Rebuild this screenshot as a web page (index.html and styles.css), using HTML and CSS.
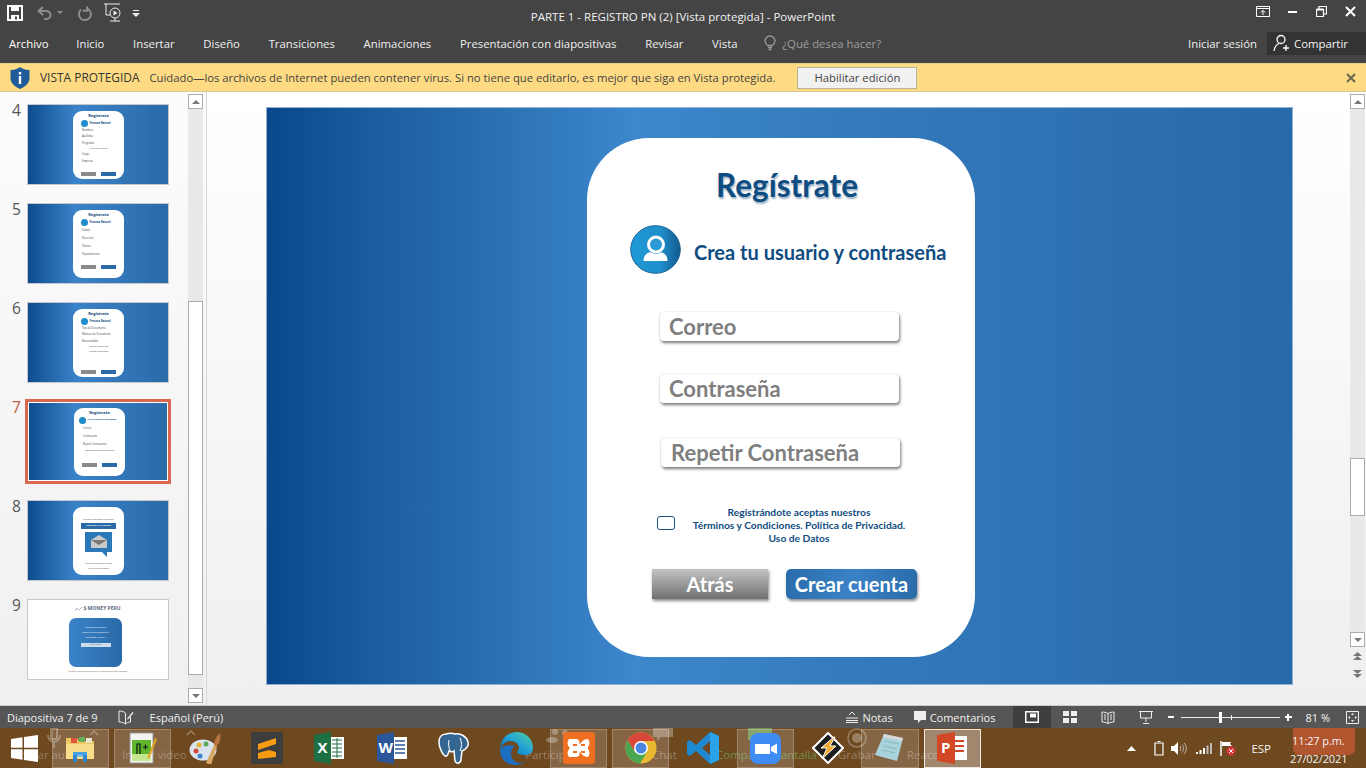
FILE: index.html
```html
<!DOCTYPE html>
<html lang="es">
<head>
    <meta charset="UTF-8">
    <title>PARTE 1 - REGISTRO PN (2) [Vista protegida] - PowerPoint</title>
    <link rel="stylesheet" href="styles.css">
</head>
<body>
    <!-- title bar -->
    <header class="titlebar">
        <div class="qat">
            <svg class="qat-save" width="16" height="16" viewBox="0 0 16 16"><path d="M1 1h14v14H1z" fill="none" stroke="#fff" stroke-width="2"/><path d="M4 1h8v5H4zM4 10h8v5H4z" fill="#fff"/><path d="M8 11.5h2v3H8z" fill="#444"/></svg>
            <svg class="qat-undo" width="18" height="16" viewBox="0 0 18 16"><path d="M7 2 2.5 6 7 10M3 6h7a4 4 0 0 1 1 8H8" fill="none" stroke="#8c8c8c" stroke-width="2"/></svg>
            <span class="qat-caret"></span>
            <svg class="qat-redo" width="16" height="16" viewBox="0 0 16 16"><path d="M10 1.5v4.2h-4M10 3.500a6 6 0 1 1-6 1" fill="none" stroke="#8c8c8c" stroke-width="2"/></svg>
            <svg class="qat-show" width="18" height="19" viewBox="0 0 18 19"><path d="M0 1h16M2 1v11h4M6 18h10M11 15v3" fill="none" stroke="#eee" stroke-width="1"/><circle cx="11" cy="10" r="5" fill="none" stroke="#eee"/><path d="M9.5 7.5v5l4-2.500z" fill="#eee"/></svg>
            <svg class="qat-more" width="8" height="8" viewBox="0 0 8 8"><path d="M1 1h6v1H1zM0 4h8L4 8z" fill="#eee"/></svg>
        </div>
        <div class="doc-title">PARTE 1 - REGISTRO PN (2) [Vista protegida] - PowerPoint</div>
        <div class="win-btns">
            <svg width="14" height="11" viewBox="0 0 14 11"><path d="M.5.5h13v10H.5zM1 2.5h12M7 9V4.5M4.8 6.5 7 4.3l2.2 2.200" fill="none" stroke="#fff"/></svg>
            <svg width="10" height="10" viewBox="0 0 10 10"><path d="M0 5h9" stroke="#fff" stroke-width="2"/></svg>
            <svg width="11" height="11" viewBox="0 0 11 11"><path d="M.5 3.5h7v7h-7zM3 3V.5h7.500V8H8" fill="none" stroke="#fff" stroke-width="1.2"/><path d="M.5 3.5h7" stroke="#fff" stroke-width="2"/></svg>
            <svg width="11" height="11" viewBox="0 0 11 11"><path d="m1 1 9 9M10 1l-9 9" stroke="#fff" stroke-width="2"/></svg>
        </div>
    </header>

    <!-- ribbon tabs -->
    <nav class="tabs">
        <span class="tab tab-file">Archivo</span>
        <span class="tab">Inicio</span>
        <span class="tab">Insertar</span>
        <span class="tab">Diseño</span>
        <span class="tab">Transiciones</span>
        <span class="tab">Animaciones</span>
        <span class="tab">Presentación con diapositivas</span>
        <span class="tab">Revisar</span>
        <span class="tab">Vista</span>
        <span class="tell-me">
            <svg width="12" height="16" viewBox="0 0 12 16"><path d="M3.5 10.5C2 9 1 7.8 1 6a5 5 0 0 1 10 0c0 1.8-1 3-2.5 4.5zM4 12.5h4M4.5 14.500h3" fill="none" stroke="#9a9a9a" stroke-width="1.3"/></svg>
            ¿Qué desea hacer?
        </span>
        <span class="signin">Iniciar sesión</span>
        <span class="share">
            <svg width="18" height="18" viewBox="0 0 18 18"><circle cx="8" cy="5.5" r="4" fill="none" stroke="#fff" stroke-width="1.3"/><path d="M1 17c.5-4 2.5-6.500 5-7.500M13 11v6M10 14h6" fill="none" stroke="#fff" stroke-width="1.3"/></svg>
            Compartir
        </span>
    </nav>

    <!-- protected view bar -->
    <div class="msgbar">
        <svg class="msg-shield" width="20" height="22" viewBox="0 0 20 22"><path d="M10 0c2.5 2 5.5 2.8 9.5 3v8c0 5-4 8.5-9.5 11C4.5 19.500.5 16 .5 11V3C4.5 2.8 7.5 2 10 0z" fill="#1f5c99"/><path d="M8.8 5h2.4v2.4H8.8zM8.8 9h2.4v8H8.8z" fill="#fff"/></svg>
        <b class="msg-head">VISTA PROTEGIDA</b>
        <span class="msg-text">Cuidado—los archivos de Internet pueden contener virus. Si no tiene que editarlo, es mejor que siga en Vista protegida.</span>
        <button class="msg-btn">Habilitar edición</button>
        <svg class="msg-close" width="10" height="10" viewBox="0 0 10 10"><path d="m1 1 8 8M9 1 1 9" stroke="#6b6650" stroke-width="2"/></svg>
    </div>

    <main class="workspace">
        <!-- slide thumbnails -->
        <aside class="thumbs">
            <div class="thumb-list">
                <div class="thumb-row">
                    <span class="thumb-num">4</span>
                    <div class="thumb">
                        <div class="mini-card">
                            <div class="mini-title">Regístrate</div>
                            <div class="mini-head"><i class="mini-dot"></i>Persona Natural</div>
                            <div class="mini-line">Nombres</div>
                            <div class="mini-line">Apellidos</div>
                            <div class="mini-line">Programa</div>
                            <div class="mini-note">¿Cuál es tu género?</div>
                            <div class="mini-line">Cargo</div>
                            <div class="mini-line">Empresa</div>
                            <div class="mini-btns"><i class="mini-back"></i><i class="mini-next"></i></div>
                        </div>
                    </div>
                </div>
                <div class="thumb-row">
                    <span class="thumb-num">5</span>
                    <div class="thumb">
                        <div class="mini-card">
                            <div class="mini-title">Regístrate</div>
                            <div class="mini-head"><i class="mini-dot"></i>Persona Natural</div>
                            <div class="mini-line mini-wide">Estado</div>
                            <div class="mini-line mini-wide">Dirección</div>
                            <div class="mini-line mini-wide">Distrito</div>
                            <div class="mini-line mini-wide">Departamento</div>
                            <div class="mini-btns mini-btns-high"><i class="mini-back"></i><i class="mini-next"></i></div>
                        </div>
                    </div>
                </div>
                <div class="thumb-row">
                    <span class="thumb-num">6</span>
                    <div class="thumb">
                        <div class="mini-card">
                            <div class="mini-title">Regístrate</div>
                            <div class="mini-head"><i class="mini-dot"></i>Persona Natural</div>
                            <div class="mini-line">Tipo de Documento</div>
                            <div class="mini-line">Número de Documento</div>
                            <div class="mini-line">Nacionalidad</div>
                            <div class="mini-note">Adjuntar documento</div>
                            <div class="mini-note">Adjuntar documento</div>
                            <div class="mini-btns"><i class="mini-back"></i><i class="mini-next"></i></div>
                        </div>
                    </div>
                </div>
                <div class="thumb-row thumb-row-active">
                    <span class="thumb-num">7</span>
                    <div class="thumb thumb-active">
                        <div class="mini-card">
                            <div class="mini-title">Regístrate</div>
                            <div class="mini-head mini-head-long"><i class="mini-dot"></i>Crea tu usuario y contraseña</div>
                            <div class="mini-line mini-wide">Correo</div>
                            <div class="mini-line mini-wide">Contraseña</div>
                            <div class="mini-line mini-wide">Repetir Contraseña</div>
                            <div class="mini-note">Registrándote aceptas nuestros</div>
                            <div class="mini-btns mini-btns-high"><i class="mini-back"></i><i class="mini-next"></i></div>
                        </div>
                    </div>
                </div>
                <div class="thumb-row">
                    <span class="thumb-num">8</span>
                    <div class="thumb">
                        <div class="mini-card mini-card-mail">
                            <div class="mini-note">Se envió un mensaje a tu correo</div>
                            <div class="mini-banner">CONFIRMA TU CORREO</div>
                            <svg class="mini-mail" width="30" height="26" viewBox="0 0 30 26"><path d="M1 0h27v20h-5v5l-5-5H1z" fill="#2a78b8"/><path d="M7 8l8-5 8 5v8H7z" fill="#c9c9c9"/><path d="M7 8l8 5 8-5" fill="#777"/></svg>
                            <div class="mini-note">Revisa tu bandeja de entrada</div>
                            <div class="mini-note">Correo de verificación</div>
                        </div>
                    </div>
                </div>
                <div class="thumb-row">
                    <span class="thumb-num">9</span>
                    <div class="thumb thumb-white">
                        <div class="mini-logo">
                            <svg width="7" height="4" viewBox="0 0 7 4"><path d="M0 4 2 1l2 2 3-3" fill="none" stroke="#7f93ad" stroke-width=".7"/></svg>
                            $ MONEY PERU
                        </div>
                        <div class="mini-square">
                            <div class="mini-note">Gracias por registrarte</div>
                            <div class="mini-note">Usuario: usuario@money.pe</div>
                            <div class="mini-note">Contraseña: *******</div>
                            <div class="mini-pill">Iniciar sesión</div>
                        </div>
                        <div class="mini-foot">Registro de usuarios para Money Perú. Todos los derechos reservados.</div>
                    </div>
                </div>
            </div>
            <div class="scroll scroll-thumbs">
                <span class="scroll-btn"><i class="arrow-up"></i></span>
                <div class="scroll-track"><div class="scroll-knob"></div></div>
                <span class="scroll-btn"><i class="arrow-down"></i></span>
            </div>
        </aside>

        <!-- current slide -->
        <section class="stage">
            <div class="slide">
                <div class="card">
                    <h1 class="card-title">Regístrate</h1>
                    <div class="card-head">
                        <svg class="avatar" width="51" height="49" viewBox="0 0 51 49">
                            <defs><linearGradient id="av" x1="0" x2="1" y1="0" y2="0"><stop offset="0" stop-color="#1e9ad6"/><stop offset=".6" stop-color="#1f8fcb"/><stop offset="1" stop-color="#13598f"/></linearGradient></defs>
                            <ellipse cx="25.5" cy="24.5" rx="24.8" ry="23.8" fill="url(#av)" stroke="#1a5f94"/>
                            <path d="M13.5 36c0-6 4-9 8-9h8c4 0 8 3 8 9z" fill="#fff"/>
                            <circle cx="26" cy="19.500" r="9.500" fill="#1f8fcb"/>
                            <circle cx="26" cy="19.500" r="7.500" fill="#2a9ad4" stroke="#fff" stroke-width="3"/>
                        </svg>
                        <h2 class="card-sub">Crea tu usuario y contraseña</h2>
                    </div>
                    <div class="field field-first">Correo</div>
                    <div class="field">Contraseña</div>
                    <div class="field field-last">Repetir Contraseña</div>
                    <div class="terms">
                        <span class="check"></span>
                        <p class="terms-text">Registrándote aceptas nuestros<br>Términos y Condiciones. Política de Privacidad.<br>Uso de Datos</p>
                    </div>
                    <div class="actions">
                        <span class="btn btn-back">Atrás</span>
                        <span class="btn btn-create">Crear cuenta</span>
                    </div>
                </div>
            </div>
        </section>

        <div class="scroll scroll-main">
            <span class="scroll-btn"><i class="arrow-up"></i></span>
            <div class="scroll-track"><div class="scroll-knob"></div></div>
            <span class="scroll-btn"><i class="arrow-down"></i></span>
            <svg class="page-arrows" width="11" height="26" viewBox="0 0 11 26"><path d="M5.5 0 10 4H1zM5.500 4 10 8H1zM1 18h9l-4.500 4zM1 22h9l-4.500 4z" fill="#777"/></svg>
        </div>
    </main>

    <!-- status bar -->
    <footer class="status">
        <span class="st-count">Diapositiva 7 de 9</span>
        <svg class="st-spell" width="16" height="15" viewBox="0 0 16 15"><path d="M7.5 3C6 1.5 3 1 1 1v11c2 0 5 .5 6.5 2 1-1 2.5-1.800 5-2V7M7.5 3v11" fill="none" stroke="#eee"/><path d="m9.5 8 5-6 1 1-5 6-1.500.5z" fill="#eee"/></svg>
        <span class="st-lang">Español (Perú)</span>
        <span class="st-notes">
            <svg width="12" height="12" viewBox="0 0 12 12"><path d="M0 7h12M0 9.5h12M0 11.500h12M3 4l3-3 3 3" fill="none" stroke="#eee"/></svg>
            Notas
        </span>
        <span class="st-comments">
            <svg width="12" height="13" viewBox="0 0 12 13"><path d="M0 0h12v9H7l-3 3V9H0z" fill="#eee"/></svg>
            Comentarios
        </span>
        <span class="view view-active"><svg width="14" height="12" viewBox="0 0 14 12"><path d="M.75.75h12.5v10.5H.75z" fill="none" stroke="#fff" stroke-width="1.5"/><path d="M5 2.5h6v4H5z" fill="#fff"/></svg></span>
        <span class="view"><svg width="14" height="12" viewBox="0 0 14 12"><path d="M0 0h6v5H0zM8 0h6v5H8zM0 7h6v5H0zM8 7h6v5H8z" fill="#eee"/></svg></span>
        <span class="view"><svg width="14" height="13" viewBox="0 0 14 13"><path d="M1 1c2 0 4 .3 6 1.500C9 1.300 11 1 13 1v10c-2 0-4 .3-6 1.500C5 11.300 3 11 1 11zM7 2.500v10M3 4h2M3 6h2M3 8h2M9 4h2M9 6h2M9 8h2" fill="none" stroke="#eee"/></svg></span>
        <span class="view"><svg width="14" height="13" viewBox="0 0 14 13"><path d="M0 .5h14M1.500 1v6h11V1M7 7v4M4 12.500h6" fill="none" stroke="#eee"/></svg></span>
        <div class="zoom-box">
            <i class="zoom-minus"></i>
            <div class="zoom-track"><i class="zoom-tick"></i><i class="zoom-knob"></i></div>
            <i class="zoom-plus"></i>
        </div>
        <span class="st-zoom">81 %</span>
        <svg class="st-fit" width="13" height="13" viewBox="0 0 13 13"><path d="M.5.5h12v12H.5z" fill="none" stroke="#eee"/><path d="M6.5 2 8 4H5zM6.5 11 8 9H5zM2 6.500 4 5v3zM11 6.500 9 5v3z" fill="#eee"/></svg>
    </footer>

    <!-- windows taskbar -->
    <div class="taskbar">
        <!-- zoom toolbar showing through the taskbar -->
        <div class="ghosts">
            <svg class="ghost-mark ghost-mic" width="14" height="20" viewBox="0 0 14 20"><path d="M4 0h6v11H4zM1 7c0 9 12 9 12 0M7 14v6" fill="none" stroke="currentColor" stroke-width="2"/></svg>
            <svg class="ghost-mark ghost-up-a" width="10" height="6" viewBox="0 0 10 6"><path d="m1 5 4-4 4 4" fill="none" stroke="currentColor" stroke-width="1.5"/></svg>
            <svg class="ghost-mark ghost-up-b" width="10" height="6" viewBox="0 0 10 6"><path d="m1 5 4-4 4 4" fill="none" stroke="currentColor" stroke-width="1.5"/></svg>
            <svg class="ghost-mark ghost-people" width="28" height="14" viewBox="0 0 28 14"><circle cx="9" cy="3" r="3" fill="currentColor"/><circle cx="19" cy="4" r="3" fill="currentColor"/><ellipse cx="6" cy="11" rx="6" ry="3" fill="currentColor"/></svg>
            <svg class="ghost-mark ghost-bubble" width="20" height="14" viewBox="0 0 20 14"><path d="M0 0h20v9H8l-4 4V9H0z" fill="currentColor"/></svg>
            <svg class="ghost-mark ghost-ring" width="20" height="20" viewBox="0 0 20 20"><circle cx="10" cy="10" r="9" fill="none" stroke="currentColor" stroke-width="1.500"/><circle cx="10" cy="10" r="5" fill="currentColor"/></svg>
            <span class="ghost-box"></span>
            <span class="ghost ghost-audio">Activar audio</span>
            <span class="ghost ghost-video">Iniciar video</span>
            <span class="ghost ghost-part">Participantes</span>
            <span class="ghost ghost-chat">Chat</span>
            <span class="ghost ghost-share">Compartir pantalla</span>
            <span class="ghost ghost-rec">Grabar</span>
            <span class="ghost ghost-react">Reacciones</span>
        </div>

        <svg class="tb-start" width="27" height="27" viewBox="0 0 27 27"><path d="M0 4l11.5-1.700v10.500H0zM13 2l14-2v12.800H13zM0 14.300h11.500v10.500L0 23zM13 14.300h14V27l-14-2z" fill="#fff"/></svg>
        <div class="tb-apps">
            <span class="app app-open">
                <svg width="32" height="32" viewBox="0 0 32 32"><path d="M2 6h11l2 3h15v18H2z" fill="#eec55e"/><path d="M2 12h28v15H2z" fill="#f8dd8a"/><path d="M7 6h6v5H7z" fill="#e4553f"/><path d="M15 5h6v5h-6z" fill="#63b05a"/><path d="M22 6h6v5h-6z" fill="#e9e4d2"/><path d="M9 20h14v3H9z" fill="#45a0dc"/><path d="M9 23h4v7H9zM19 23h4v7h-4z" fill="#2f86c8"/><path d="M13 23h6v2h-6z" fill="#7cc4ec"/></svg>
            </span>
            <span class="app app-open">
                <svg width="30" height="32" viewBox="0 0 30 32"><path d="M3 1h23v30H3z" fill="#f4f4f4" stroke="#999"/><path d="M5 8h19v21H5z" fill="#5fb62c"/><path d="M5 22h19v7H5z" fill="#c5e88f"/><path d="M10 22V12h3v10M16 15h5M18.500 12.500v5" fill="none" stroke="#111" stroke-width="1.200"/><path d="m21 24 7-18 2 1-7 18-3 2z" fill="#e3a52a"/></svg>
            </span>
            <span class="app">
                <svg width="32" height="32" viewBox="0 0 32 32"><ellipse cx="14" cy="18" rx="13.500" ry="10.500" fill="#d9e4ee"/><circle cx="7" cy="19" r="2.500" fill="#d24a3e"/><circle cx="10" cy="13" r="2.500" fill="#e8b530"/><circle cx="17" cy="12" r="2.500" fill="#5aa85a"/><circle cx="11" cy="24" r="2.500" fill="#3f83c8"/><path d="m17 31 8-18 3 1-6 19z" fill="#d8a763"/><path d="M25 13c0-4 2-8 6-12 1 4 0 10-3 13z" fill="#b9773f"/></svg>
            </span>
            <span class="app">
                <svg width="32" height="32" viewBox="0 0 32 32"><rect width="32" height="32" rx="2" fill="#3d3d3d"/><path d="M7 12 25 6v6L7 18zM7 15l18 5v5L7 27v-6l11-3z" fill="#f79c13"/></svg>
            </span>
            <span class="app">
                <svg width="30" height="32" viewBox="0 0 30 32"><path d="M16 5h14v22H16z" fill="#fff"/><path d="M18 8h10M18 12h10M18 16h10M18 20h10M18 24h10M23 6v20" stroke="#217346"/><path d="M0 3 17 0v32L0 29z" fill="#1d7044"/><text class="tile-letter" x="3.500" y="21">X</text></svg>
            </span>
            <span class="app">
                <svg width="30" height="32" viewBox="0 0 30 32"><path d="M16 5h14v22H16z" fill="#fff"/><path d="M18 9h10M18 13h10M18 17h10M18 21h10" stroke="#2b579a" stroke-width="1.500"/><path d="M0 3 17 0v32L0 29z" fill="#2b579a"/><text class="tile-letter" x="1.500" y="21">W</text></svg>
            </span>
            <span class="app">
                <svg width="32" height="33" viewBox="0 0 32 33"><path d="M8 2c-5 0-7 4-7 8 0 5 3 12 6 14 3 1 3-3 4-5 2 1 4 1 5 0l1 10c2 4 6 2 6-2l1-8c5-2 7-6 6-9-1-5-7-9-13-8-3-1-6-1-9 0z" fill="#336791" stroke="#fff" stroke-width="1.500"/><path d="M11 8c-1 4 0 8 1 11M22 6c2 4 2 9 0 13" fill="none" stroke="#fff"/></svg>
            </span>
            <span class="app">
                <svg width="33" height="33" viewBox="0 0 33 33">
                    <defs><linearGradient id="edge" x1="0" x2="1" y1="1" y2="0"><stop offset="0" stop-color="#0c59a4"/><stop offset=".5" stop-color="#1fa1d8"/><stop offset="1" stop-color="#52d2a0"/></linearGradient></defs>
                    <path d="M16.500 0C25 0 33 6 33 16c0 5-4 7-8 7-5 0-8-1-8-3 0-1 2-1 2-4 0-4-4-7-8-7C6 9 1 13 0 18 0 8 7 0 16.500 0z" fill="url(#edge)"/>
                    <path d="M0 18c0 9 7 15 15 15 4 0 7-1 10-3-8 3-14-2-14-8 0-4 2-7 4-8-7-2-13 0-15 4z" fill="#1c6fc0"/>
                </svg>
            </span>
            <span class="app app-open">
                <svg width="32" height="32" viewBox="0 0 32 32"><rect width="32" height="32" rx="3" fill="#ee6f1f"/><path d="M6 7h7c4 0 4 5 3 6 2-2 4-6 9-6 2 3 2 5 0 8v2c2 3 2 5 0 8-5 0-7-4-9-6 1 2 1 6-3 6H6c-2-3-2-6 1-9-3-3-3-6-1-9z" fill="#fff"/><path d="M10 12h4v2h-4zM18 12h4v2h-4zM10 19h4v2h-4zM18 19h4v2h-4z" fill="#ee6f1f"/></svg>
            </span>
            <span class="app app-open">
                <svg width="32" height="32" viewBox="0 0 32 32"><circle cx="16" cy="16" r="15.500" fill="#e9b92f"/><path d="M16 .5A15.500 15.500 0 0 0 2.600 8.200L9 19 16 9h13.500A15.500 15.500 0 0 0 16 .5z" fill="#d9473a"/><path d="M2.600 8.200A15.500 15.500 0 0 0 15 31.500L22 20H10z" fill="#4aa651"/><circle cx="16" cy="16" r="7" fill="#fff"/><circle cx="16" cy="16" r="5.500" fill="#4a86e0"/></svg>
            </span>
            <span class="app">
                <svg width="32" height="32" viewBox="0 0 32 32"><path d="M23 0 32 4v24l-9 4L9 19l-6 5-3-2V10l3-2 6 5zM23 9l-8 7 8 7z" fill="#1f8ad2"/><path d="M23 0 32 4v24l-9 4z" fill="#2ba3ea"/></svg>
            </span>
            <span class="app app-open">
                <svg width="31" height="31" viewBox="0 0 31 31"><rect width="31" height="31" rx="8" fill="#3f8cf5"/><path d="M5 11h15v10H5z" fill="#fff"/><path d="m21 14 6-3.500V21L21 18z" fill="#fff"/></svg>
            </span>
            <span class="app">
                <svg width="32" height="32" viewBox="0 0 32 32"><path d="M16 1 31 16 16 31 1 16z" fill="#1c1c1c" stroke="#fff" stroke-width="2"/><path d="M22 5 9 16h6l-5 11 14-13h-6l5-9z" fill="#f0a92e" stroke="#fff"/></svg>
            </span>
            <span class="app app-open">
                <svg width="32" height="32" viewBox="0 0 32 32"><path d="M10 2 29 6 23 29 1 23z" fill="#a9d3dc"/><path d="M10 2 29 6l-1 3L9 5z" fill="#d7d7d7"/><path d="m11 9 14 3M10 14l13 3M8 18l13 3" stroke="#86b6c2"/></svg>
            </span>
            <span class="app app-current">
                <svg width="30" height="32" viewBox="0 0 30 32"><path d="M14 4h16v24H14z" fill="#fff"/><path d="M18 9h9M18 14h9M18 19h9" stroke="#d24726" stroke-width="2"/><path d="M0 3 18 0v32L0 29z" fill="#d24726"/><text class="tile-letter" x="4" y="21">P</text></svg>
            </span>
        </div>

        <div class="tray">
            <svg class="tr-up" width="9" height="5" viewBox="0 0 9 5"><path d="M4.500 0 9 5H0z" fill="#fff"/></svg>
            <svg class="tr-bat" width="10" height="15" viewBox="0 0 10 15"><path d="M1 2h8v12H1zM3.500 .5h3" fill="none" stroke="#fff" stroke-width="1.200"/></svg>
            <svg class="tr-vol" width="16" height="13" viewBox="0 0 16 13"><path d="M0 4h3l4-4v13L3 9H0z" fill="#fff"/><path d="M9 4c1 1 1 4 0 5M11 2.500c2 2 2 6 0 8M13 1c3 3 3 8 0 11" fill="none" stroke="#bbb"/></svg>
            <svg class="tr-net" width="16" height="11" viewBox="0 0 16 11"><path d="M0 9h2v2H0zM3.500 7h2v4h-2zM7 5h2v6H7z" fill="#fff"/><path d="M10.500 2.500h2V11h-2zM14 0h2v11h-2z" fill="#bbb"/></svg>
            <svg class="tr-flag" width="16" height="15" viewBox="0 0 16 15"><path d="M1 0v15" stroke="#fff" stroke-width="1.500"/><path d="M2 1h9l-1 2 2 2H2z" fill="#fff"/><circle cx="11" cy="10" r="4.500" fill="#d8343c"/><path d="m9 8 4 4m0-4-4 4" stroke="#fff"/></svg>
            <span class="tr-lang">ESP</span>
            <div class="clock">
                <span class="clock-badge"></span>
                <span class="clock-time">11:27 p.m.</span>
                <span class="clock-date">27/02/2021</span>
            </div>
        </div>
    </div>
</body>
</html>
```

FILE: styles.css
```css
* {
    margin: 0;
    padding: 0;
    box-sizing: border-box;
}

body {
    height: 100vh;
    overflow: hidden;
    display: flex;
    flex-direction: column;
    font-family: 'Open Sans', sans-serif;
    background: #fff;
}

svg {
    display: block;
    flex: none;
}

/* title bar */
.titlebar {
    height: 32px;
    flex: none;
    display: grid;
    grid-template-columns: 1fr auto 1fr;
    align-items: start;
    background: #444444;
    color: #f2f2f2;
}

.qat {
    display: flex;
    align-items: center;
    padding: 3px 0 0 7px;
}

.qat-undo { margin-left: 13px; }

.qat-caret {
    width: 0;
    height: 0;
    margin-left: 3px;
    border: 3px solid transparent;
    border-top-color: #8c8c8c;
    border-bottom: 0;
}

.qat-redo { margin-left: 14px; }
.qat-show { margin-left: 11px; }
.qat-more { margin-left: 10px; }

.doc-title {
    padding-top: 9px;
    font-size: 11.5px;
    white-space: nowrap;
}

.win-btns {
    display: flex;
    justify-content: flex-end;
    align-items: center;
    gap: 18px;
    padding: 6px 10px 0 0;
}

/* ribbon tabs */
.tabs {
    height: 31px;
    flex: none;
    display: flex;
    align-items: center;
    gap: 28.7px;
    padding: 0 0 9px 9px;
    background: #444444;
    color: #efefef;
    font-size: 11.35px;
    white-space: nowrap;
}

.tab-file { margin-right: -1px; color: #fff; }

.tell-me {
    display: flex;
    align-items: center;
    gap: 6px;
    margin-left: -2px;
    color: #9e9e9e;
}

.signin {
    margin-left: auto;
    margin-right: -18.7px;
}

.share {
    width: 99px;
    height: 23px;
    display: flex;
    align-items: center;
    gap: 3px;
    padding-left: 6px;
    background: #333333;
    color: #f4f4f4;
}

/* protected view bar */
.msgbar {
    height: 29px;
    flex: none;
    display: flex;
    align-items: center;
    padding-left: 10px;
    background: #fedb82;
    border-top: 1px solid #e8cd86;
    border-bottom: 1px solid #d9c99a;
    color: #444;
    font-size: 11.27px;
    white-space: nowrap;
}

.msg-head {
    margin-left: 10px;
    font-weight: 400;
    color: #333;
    font-size: 11.95px;
}

.msg-text { margin-left: 10px; }

.msg-btn {
    width: 120px;
    height: 22px;
    margin-left: 22px;
    background: #f1f1f1;
    border: 1px solid #b9b39b;
    color: #444;
    font: inherit;
}

.msg-close { margin-left: auto; margin-right: 10px; }

/* main area */
.workspace {
    flex: 1;
    min-height: 0;
    display: flex;
    background: linear-gradient(#fff, #efefef);
    border-bottom: 1px solid #cfcfcf;
}

.thumbs {
    width: 207px;
    flex: none;
    display: flex;
    padding-right: 3px;
    background: linear-gradient(#fcfcfc, #f0f0f0);
    border-right: 1px solid #d6d6d6;
}

.thumb-list {
    width: 188px;
    padding-top: 12px;
}

.thumb-row {
    height: 99px;
    display: flex;
    padding-left: 12px;
}

.thumb-num {
    width: 14px;
    margin-top: -5px;
    font-size: 15.5px;
    color: #555;
}

.thumb-row-active .thumb-num { color: #c0563a; }

.thumb {
    width: 142px;
    height: 81px;
    margin-left: 1px;
    padding: 6px 0 0 45px;
    background: linear-gradient(90deg, #0d4c8f 0, #3a83c8 34%, #2a6aa8 100%);
    border: 1.5px solid #c4c8cc;
}

.thumb-active {
    height: 85px;
    width: 146px;
    margin: -2px 0 0 -1px;
    padding: 6px 0 0 46px;
    border: 3px solid #d6694f;
    box-shadow: inset 0 0 0 1px #fff;
}

.mini-card {
    width: 51px;
    height: 68px;
    display: flex;
    flex-direction: column;
    padding: 2px 0 3px 9px;
    background: #fff;
    border-radius: 9px;
    color: #444;
    font-size: 2.6px;
    line-height: 6.5px;
    white-space: nowrap;
    overflow: hidden;
}

.mini-title {
    margin-left: -9px;
    text-align: center;
    font-size: 4px;
    font-weight: 700;
    color: #14497c;
}

.mini-head {
    display: flex;
    align-items: center;
    gap: 1.5px;
    margin-left: -1px;
    font-size: 2.6px;
    font-weight: 700;
    color: #14497c;
}

.mini-head-long {
    margin-left: -4px;
    font-size: 2px;
}

.mini-dot {
    width: 7px;
    height: 7px;
    flex: none;
    border-radius: 50%;
    background: #1f8ccb;
}

.mini-wide { line-height: 8px; }

.mini-note {
    margin-left: -9px;
    text-align: center;
    font-size: 2px;
    line-height: 5px;
}

.mini-btns {
    display: flex;
    gap: 5px;
    margin: auto 0 0 -1px;
}

.mini-btns-high { margin-bottom: 6px; }

.mini-back {
    width: 15px;
    height: 4px;
    background: #8a8a8a;
}

.mini-next {
    width: 15px;
    height: 4px;
    background: #2a6aa8;
}

.mini-card-mail { padding: 10px 0 0 0; }

.mini-card-mail .mini-note { margin-left: 0; }

.mini-banner {
    width: 35px;
    margin: 1px auto 3px;
    background: #2a6aa8;
    color: #fff;
    text-align: center;
    font-size: 2.2px;
    font-weight: 700;
    line-height: 6px;
}

.mini-mail { margin: 0 auto 3px; }

.thumb-white {
    padding: 5px 0 0 0;
    background: #fff;
}

.mini-logo {
    display: flex;
    align-items: center;
    justify-content: center;
    gap: 1px;
    font-size: 5px;
    font-weight: 700;
    color: #5d6b80;
    line-height: 7px;
}

.mini-square {
    width: 53px;
    height: 49px;
    margin: 6px 0 0 41px;
    padding-top: 7px;
    background: linear-gradient(90deg, #3a83c8, #2a6aa8);
    border-radius: 7px;
    color: #fff;
    white-space: nowrap;
}

.mini-square .mini-note { margin: 0; }

.mini-pill {
    width: 30px;
    margin: 3px auto 0;
    background: #cfdcea;
    color: #2a6aa8;
    text-align: center;
    font-size: 2px;
    line-height: 4px;
}

.mini-foot {
    margin-top: 3px;
    text-align: center;
    font-size: 1.8px;
    color: #555;
    white-space: nowrap;
}

/* scrollbars */
.scroll {
    display: flex;
    flex-direction: column;
    width: 15px;
    flex: none;
}

.scroll-btn {
    height: 15px;
    flex: none;
    display: flex;
    align-items: center;
    justify-content: center;
    background: #fff;
    border: 1px solid #ababab;
}

.arrow-up,
.arrow-down {
    width: 0;
    height: 0;
    border: 4px solid transparent;
    border-bottom: 0;
    border-top: 4px solid #777;
}

.arrow-up {
    border-top: 0;
    border-bottom: 4px solid #777;
}

.scroll-track {
    flex: 1;
    background: #e9e9e9;
}

.scroll-knob {
    height: 58px;
    background: #fff;
    border: 1px solid #ababab;
}

.scroll-thumbs {
    margin-top: 2px;
    height: 609px;
}

.scroll-thumbs .scroll-knob {
    height: 374px;
    margin-top: 192px;
}

.scroll-main {
    height: 610px;
    margin: 2px 1px 0 0;
}

.scroll-main .scroll-track { height: 523px; flex: none; }
.scroll-main .scroll-knob { margin-top: 349px; }

.page-arrows { margin: 5px 0 0 2px; }

/* slide */
.stage {
    flex: 1;
    min-width: 0;
    padding: 15px 0 0 59px;
}

.slide {
    width: 1027px;
    height: 578px;
    padding: 30px 0 0 320px;
    background: linear-gradient(90deg, #08488b 0, #1a5c9f 10%, #3d87cc 36%, #3278ba 62%, #286aa9 100%);
    border: 1px solid #8fb0d0;
}

.card {
    width: 388px;
    height: 519px;
    padding-top: 28px;
    background: #fff;
    border-radius: 62px;
}

.card-title {
    margin-left: 12px;
    text-align: center;
    font-family: 'Lato', sans-serif;
    font-size: 31.5px;
    font-weight: 700;
    line-height: 38px;
    color: #0f4c81;
    text-shadow: 1px 2px 2px #9db0c4;
}

.card-head {
    display: flex;
    align-items: center;
    margin: 21px 0 0 43px;
}

.card-sub {
    margin: 4px 0 0 13px;
    font-family: 'Lato', sans-serif;
    font-size: 20px;
    font-weight: 700;
    white-space: nowrap;
    color: #0f4c81;
}

.field {
    width: 239px;
    height: 29px;
    margin: 33px 0 0 73px;
    padding-left: 9px;
    background: #fff;
    border-radius: 4px;
    box-shadow: 0 0 1px #bbb, 1px 2px 3px #777;
    font-family: 'Lato', sans-serif;
    font-size: 22px;
    font-weight: 700;
    line-height: 29px;
    color: #7f7f7f;
    white-space: nowrap;
}

.field-first { margin-top: 38px; }

.field-last {
    margin-top: 35px;
    margin-left: 74px;
    padding-left: 10px;
}

.terms {
    display: flex;
    align-items: center;
    margin: 39px 0 0 70px;
}

.check {
    width: 18px;
    height: 14px;
    flex: none;
    margin-bottom: 6px;
    border: 1px solid #1f4e79;
    border-radius: 3px;
}

.terms-text {
    width: 230px;
    margin-left: 9px;
    text-align: center;
    font-family: 'Lato', sans-serif;
    font-size: 10.25px;
    font-weight: 700;
    line-height: 13px;
    color: #0f4c81;
    white-space: nowrap;
}

.actions {
    display: flex;
    gap: 18px;
    margin: 24px 0 0 65px;
}

.btn {
    height: 30px;
    text-align: center;
    font-family: 'Lato', sans-serif;
    font-size: 20px;
    font-weight: 700;
    line-height: 30px;
    color: #fff;
    box-shadow: 1px 2px 3px #888;
}

.btn-back {
    width: 116px;
    background: linear-gradient(#c4c4c4, #6f6f6f);
}

.btn-create {
    width: 131px;
    border-radius: 5px;
    background: linear-gradient(100deg, #2a6cab, #3a82c6 50%, #2a6aa8);
}

/* status bar */
.status {
    height: 22px;
    flex: none;
    display: flex;
    align-items: center;
    padding-left: 7px;
    background: #565656;
    color: #f2f2f2;
    font-size: 11px;
    white-space: nowrap;
}

.st-spell { margin-left: 20px; }
.st-lang { margin-left: 16px; }

.st-notes {
    display: flex;
    align-items: center;
    gap: 4px;
    margin-left: auto;
}

.st-comments {
    display: flex;
    align-items: center;
    gap: 4px;
    margin-left: 21px;
}

.view {
    width: 38px;
    height: 22px;
    display: flex;
    align-items: center;
    justify-content: center;
}

.st-comments + .view { margin-left: 18px; }
.view-active { background: #3f3f3f; }

.zoom-box {
    display: flex;
    align-items: center;
    margin-left: 3px;
}

.zoom-minus {
    width: 6px;
    height: 2px;
    background: #fff;
}

.zoom-track {
    position: relative;
    width: 99px;
    height: 1px;
    margin: 0 4.5px 0 7px;
    background: #eee;
}

.zoom-tick {
    position: absolute;
    left: 50px;
    top: -2px;
    width: 1px;
    height: 5px;
    background: #eee;
}

.zoom-knob {
    position: absolute;
    left: 38px;
    top: -5px;
    width: 3px;
    height: 11px;
    background: #fff;
}

.zoom-plus {
    position: relative;
    width: 7px;
    height: 2px;
    background: #fff;
}

.zoom-plus::after {
    content: "";
    position: absolute;
    left: 2.5px;
    top: -2.5px;
    width: 2px;
    height: 7px;
    background: #fff;
}

.st-zoom { margin-left: 13.5px; }
.st-fit { margin: 0 7px 0 16px; }

/* taskbar */
.taskbar {
    position: relative;
    height: 40px;
    flex: none;
    display: flex;
    align-items: center;
    background: #6e481f;
}

.tb-start {
    position: relative;
    margin-left: 11px;
}

.tb-apps {
    position: relative;
    display: flex;
    margin-left: 11px;
}

.app {
    position: relative;
    width: 62.3px;
    height: 40px;
    display: flex;
    align-items: center;
    justify-content: center;
    flex: none;
}

.app-open::before,
.app-current::before {
    content: "";
    position: absolute;
    top: 1px;
    bottom: 0;
    left: 2.5px;
    right: 2.5px;
    background: rgba(255, 255, 255, 0.16);
    border: 1px solid rgba(255, 255, 255, 0.22);
}

.app-current::before {
    background: rgba(255, 255, 255, 0.35);
    border: 1px solid rgba(255, 255, 255, 0.8);
}

.app svg { position: relative; }

.tile-letter {
    font-family: 'Open Sans', sans-serif;
    font-size: 15px;
    font-weight: 700;
    fill: #fff;
}

.ghosts {
    position: absolute;
    inset: 0;
    font-size: 11.5px;
    color: rgba(255, 255, 255, 0.3);
    pointer-events: none;
}

.ghost {
    position: absolute;
    top: 19px;
    white-space: nowrap;
}

.ghost-audio { left: 12px; }
.ghost-video { left: 122px; }
.ghost-part { left: 525px; }
.ghost-chat { left: 652px; }
.ghost-share { left: 716px; color: rgba(120, 200, 110, 0.55); }
.ghost-rec { left: 838px; }
.ghost-react { left: 907px; }

.ghost-mark { position: absolute; }
.ghost-mic { left: 47px; top: 0; }
.ghost-up-a { left: 89px; top: 2px; }
.ghost-up-b { left: 186px; top: 2px; }
.ghost-people { left: 546px; top: 1px; }
.ghost-bubble { left: 653px; top: 0; }
.ghost-ring { left: 847px; top: 0; }

.ghost-box {
    position: absolute;
    left: 748px;
    top: 0;
    width: 24px;
    height: 12px;
    background: rgba(120, 200, 110, 0.6);
}

.tray {
    position: relative;
    margin-left: auto;
    height: 40px;
    display: flex;
    align-items: center;
    color: #f4f4f4;
    font-size: 11.5px;
}

.tr-bat { margin-left: 18px; }
.tr-vol { margin-left: 7px; }
.tr-net { margin-left: 9px; }
.tr-flag { margin-left: 8px; }
.tr-lang { margin-left: 15px; }

.clock {
    position: relative;
    width: 76px;
    margin-left: 19px;
    padding-top: 4px;
    font-size: 11px;
    letter-spacing: -0.1px;
    line-height: 18px;
    white-space: nowrap;
}

.clock-badge {
    position: absolute;
    left: 3px;
    top: 0;
    width: 62px;
    height: 27px;
    background: #b0552d;
    border-radius: 0 0 6px 6px;
}

.clock-time,
.clock-date {
    position: relative;
    display: block;
}

.clock-time { margin-left: 2px; }
```
